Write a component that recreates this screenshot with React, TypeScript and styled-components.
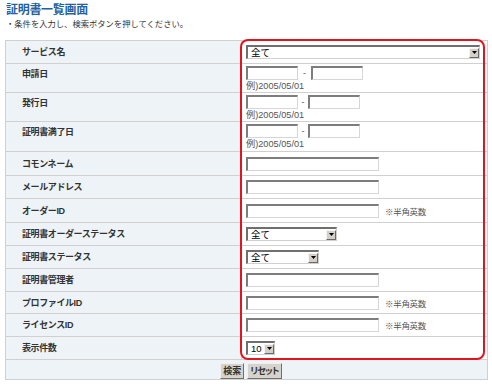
import React from 'react';
import styled, { createGlobalStyle } from 'styled-components';

const Global = createGlobalStyle`
  html, body { margin: 0; padding: 0; background: #fff; }
  body { font-family: "Liberation Sans", "Noto Sans CJK JP", sans-serif; color: #333; }
`;

const Page = styled.div`
  width: 492px;
  height: 384px;
  box-sizing: border-box;
  padding: 3px 5px 0 5px;
  overflow: hidden;
`;

const Title = styled.h1`
  margin: 0 0 0 1px;
  font-size: 12px;
  line-height: 14px;
  font-weight: bold;
  color: #24619f;
  letter-spacing: -0.3px;
`;

const Lead = styled.p`
  margin: 1px 0 0 1px;
  font-size: 8.3px;
  line-height: 12px;
  color: #333;
`;

const Frame = styled.div`
  position: relative;
  margin-top: 10px;
  width: 482px;
`;

const Table = styled.table`
  border-collapse: collapse;
  table-layout: fixed;
  width: 482px;
  border: 1px solid #c9c9c9;
`;

const Label = styled.th<{ $h: number; $top?: boolean }>`
  height: ${p => p.$h}px;
  box-sizing: border-box;
  padding: ${p => (p.$top ? '4px' : '0')} 0 0 16px;
  vertical-align: ${p => (p.$top ? 'top' : 'middle')};
  text-align: left;
  background: #eef3f7;
  border: 1px solid #d0d0d0;
  font-size: 9px;
  line-height: 12px;
  font-weight: bold;
  color: #333;
  letter-spacing: -0.4px;
`;

const Value = styled.td<{ $top?: boolean }>`
  padding: ${p => (p.$top ? '2px' : '0')} 0 0 4px;
  vertical-align: ${p => (p.$top ? 'top' : 'middle')};
  background: #fff;
  border: 1px solid #d0d0d0;
`;

const Line = styled.div`
  display: flex;
  align-items: center;
`;

const Field = styled.div<{ $w: number }>`
  width: ${p => p.$w}px;
  height: 14px;
  box-sizing: border-box;
  background: #fff;
  border-style: solid;
  border-width: 2px 1px 1px 2px;
  border-color: #7d7d7d #d6d6d6 #d6d6d6 #7d7d7d;
`;

const Dash = styled.span<{ $gap: number }>`
  width: ${p => p.$gap}px;
  text-align: center;
  font-size: 9px;
  color: #555;
`;

const Note = styled.div`
  margin-top: 1px;
  font-size: 9.2px;
  line-height: 10px;
  color: #555;
`;

const Hint = styled.span`
  margin-left: 6px;
  font-size: 8.5px;
  color: #555;
  letter-spacing: -0.3px;
`;

const Select = styled.div<{ $w: number }>`
  display: flex;
  align-items: center;
  width: ${p => p.$w}px;
  height: 14px;
  box-sizing: border-box;
  background: #fff;
  border-style: solid;
  border-width: 2px 1px 1px 2px;
  border-color: #6f6f6f #d0d0d0 #d0d0d0 #6f6f6f;
  padding-left: 3px;
  font-size: 9.5px;
  color: #000;
`;

const SelectText = styled.span`
  flex: 1;
  line-height: 10px;
`;

const Arrow = styled.span`
  display: flex;
  align-items: center;
  justify-content: center;
  width: 10px;
  height: 10px;
  box-sizing: border-box;
  background: #d4d0c8;
  border: 1px solid;
  border-color: #f4f4f4 #6a6a6a #6a6a6a #f4f4f4;
`;

const ButtonCell = styled.td`
  height: 19px;
  padding: 0 0 0 9px;
  background: #eef3f7;
  border: 1px solid #d0d0d0;
  text-align: center;
  vertical-align: middle;
`;

const Buttons = styled.div`
  display: inline-flex;
  gap: 3px;
`;

const Button = styled.button<{ $tight?: boolean }>`
  height: 16px;
  padding: 0 2px;
  box-sizing: border-box;
  background: #d6d3cc;
  border: 1px solid;
  border-color: #f0f0f0 #707070 #707070 #f0f0f0;
  font-family: "Liberation Sans", "Noto Sans CJK JP", sans-serif;
  font-feature-settings: "palt";
  font-size: 9px;
  font-weight: bold;
  line-height: 12px;
  color: #333;
  letter-spacing: ${p => (p.$tight ? '-0.8px' : '0')};
`;

const Highlight = styled.div`
  position: absolute;
  left: 235px;
  top: -1px;
  width: 245px;
  height: 321px;
  box-sizing: border-box;
  border: 2px solid #e3141c;
  border-radius: 8px;
  pointer-events: none;
`;

const DropArrow = () => (
  <Arrow>
    <svg width="5" height="3" viewBox="0 0 5 3">
      <path d="M0 0 H5 L2.5 3 Z" fill="#000" />
    </svg>
  </Arrow>
);

const Dropdown = ({ w, text }: { w: number; text: string }) => (
  <Select $w={w}>
    <SelectText>{text}</SelectText>
    <DropArrow />
  </Select>
);

const DateRange = ({ gap }: { gap: number }) => (
  <>
    <Line>
      <Field $w={52} />
      <Dash $gap={gap}>-</Dash>
      <Field $w={52} />
    </Line>
    <Note>例)2005/05/01</Note>
  </>
);

const TextWithHint = ({ hint }: { hint?: boolean }) => (
  <Line>
    <Field $w={133} />
    {hint && <Hint>※半角英数</Hint>}
  </Line>
);

export default function App() {
  return (
    <Page>
      <Global />
      <Title>証明書一覧画面</Title>
      <Lead>・条件を入力し、検索ボタンを押してください。</Lead>
      <Frame>
        <Table>
          <colgroup>
            <col style={{ width: 236 }} />
            <col style={{ width: 246 }} />
          </colgroup>
          <tbody>
            <tr>
              <Label $h={23}>サービス名</Label>
              <Value><Dropdown w={234} text="全て" /></Value>
            </tr>
            <tr>
              <Label $h={29} $top>申請日</Label>
              <Value $top><DateRange gap={13} /></Value>
            </tr>
            <tr>
              <Label $h={29} $top>発行日</Label>
              <Value $top><DateRange gap={10} /></Value>
            </tr>
            <tr>
              <Label $h={30} $top>証明書満了日</Label>
              <Value $top><DateRange gap={10} /></Value>
            </tr>
            <tr>
              <Label $h={24}>コモンネーム</Label>
              <Value><TextWithHint /></Value>
            </tr>
            <tr>
              <Label $h={23}>メールアドレス</Label>
              <Value><TextWithHint /></Value>
            </tr>
            <tr>
              <Label $h={24}>オーダーID</Label>
              <Value><TextWithHint hint /></Value>
            </tr>
            <tr>
              <Label $h={23}>証明書オーダーステータス</Label>
              <Value><Dropdown w={91} text="全て" /></Value>
            </tr>
            <tr>
              <Label $h={23}>証明書ステータス</Label>
              <Value><Dropdown w={73} text="全て" /></Value>
            </tr>
            <tr>
              <Label $h={23}>証明書管理者</Label>
              <Value><TextWithHint /></Value>
            </tr>
            <tr>
              <Label $h={22}>プロファイルID</Label>
              <Value><TextWithHint hint /></Value>
            </tr>
            <tr>
              <Label $h={23}>ライセンスID</Label>
              <Value><TextWithHint hint /></Value>
            </tr>
            <tr>
              <Label $h={23}>表示件数</Label>
              <Value><Dropdown w={29} text="10" /></Value>
            </tr>
            <tr>
              <ButtonCell colSpan={2}>
                <Buttons>
                  <Button>検索</Button>
                  <Button $tight>リセット</Button>
                </Buttons>
              </ButtonCell>
            </tr>
          </tbody>
        </Table>
        <Highlight />
      </Frame>
    </Page>
  );
}
